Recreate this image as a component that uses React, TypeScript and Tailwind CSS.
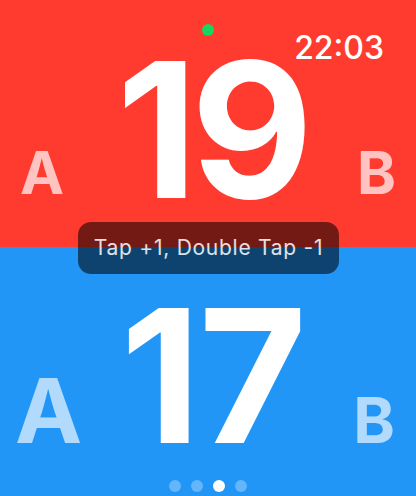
import React from "react";

const font = { fontFamily: "Inter, 'Noto Sans', sans-serif" };

export default function App() {
  return (
    <div className="relative w-[416px] h-[496px] overflow-hidden flex flex-col" style={font}>
      {/* top half */}
      <div className="relative h-[247px] bg-[#FF3B30] pt-[36px] px-5 flex items-baseline justify-between">
        <span className="text-[59px] leading-none font-bold text-white/70 -translate-y-[4px]">A</span>
        <span className="text-[188px] leading-none font-bold text-white tracking-[-0.035em] -mr-[2px]">19</span>
        <span className="text-[59px] leading-none font-bold text-white/70 -translate-y-[4px]">B</span>
        <div className="absolute left-[202px] top-[24px] w-3 h-3 rounded-full bg-[#19D45F]" />
        <div className="absolute right-[32px] top-[32px] text-[32px] leading-none font-medium text-white">22:03</div>
      </div>
      {/* bottom half */}
      <div className="relative flex-1 bg-[#2196F7] pt-[36px] pl-[15px] pr-[21px] flex items-baseline justify-between">
        <span className="text-[90px] leading-none font-bold text-white/65">A</span>
        <span className="text-[186px] leading-none font-bold text-white tracking-[-0.01em] -ml-[10px]">17</span>
        <span className="text-[63px] leading-none font-bold text-white/65">B</span>
        <div className="absolute left-0 right-0 bottom-[4px] flex justify-center gap-[10px]">
          <div className="w-3 h-3 rounded-full bg-white/30" />
          <div className="w-3 h-3 rounded-full bg-white/30" />
          <div className="w-3 h-3 rounded-full bg-white" />
          <div className="w-3 h-3 rounded-full bg-white/30" />
        </div>
      </div>
      {/* toast */}
      <div className="absolute left-[78px] top-[222px] w-[261px] h-[52px] rounded-[13px] bg-black/55 flex items-center justify-center">
        <span className="text-[21px] text-white/85 tracking-[0.035em]">Tap +1, Double Tap -1</span>
      </div>
    </div>
  );
}
